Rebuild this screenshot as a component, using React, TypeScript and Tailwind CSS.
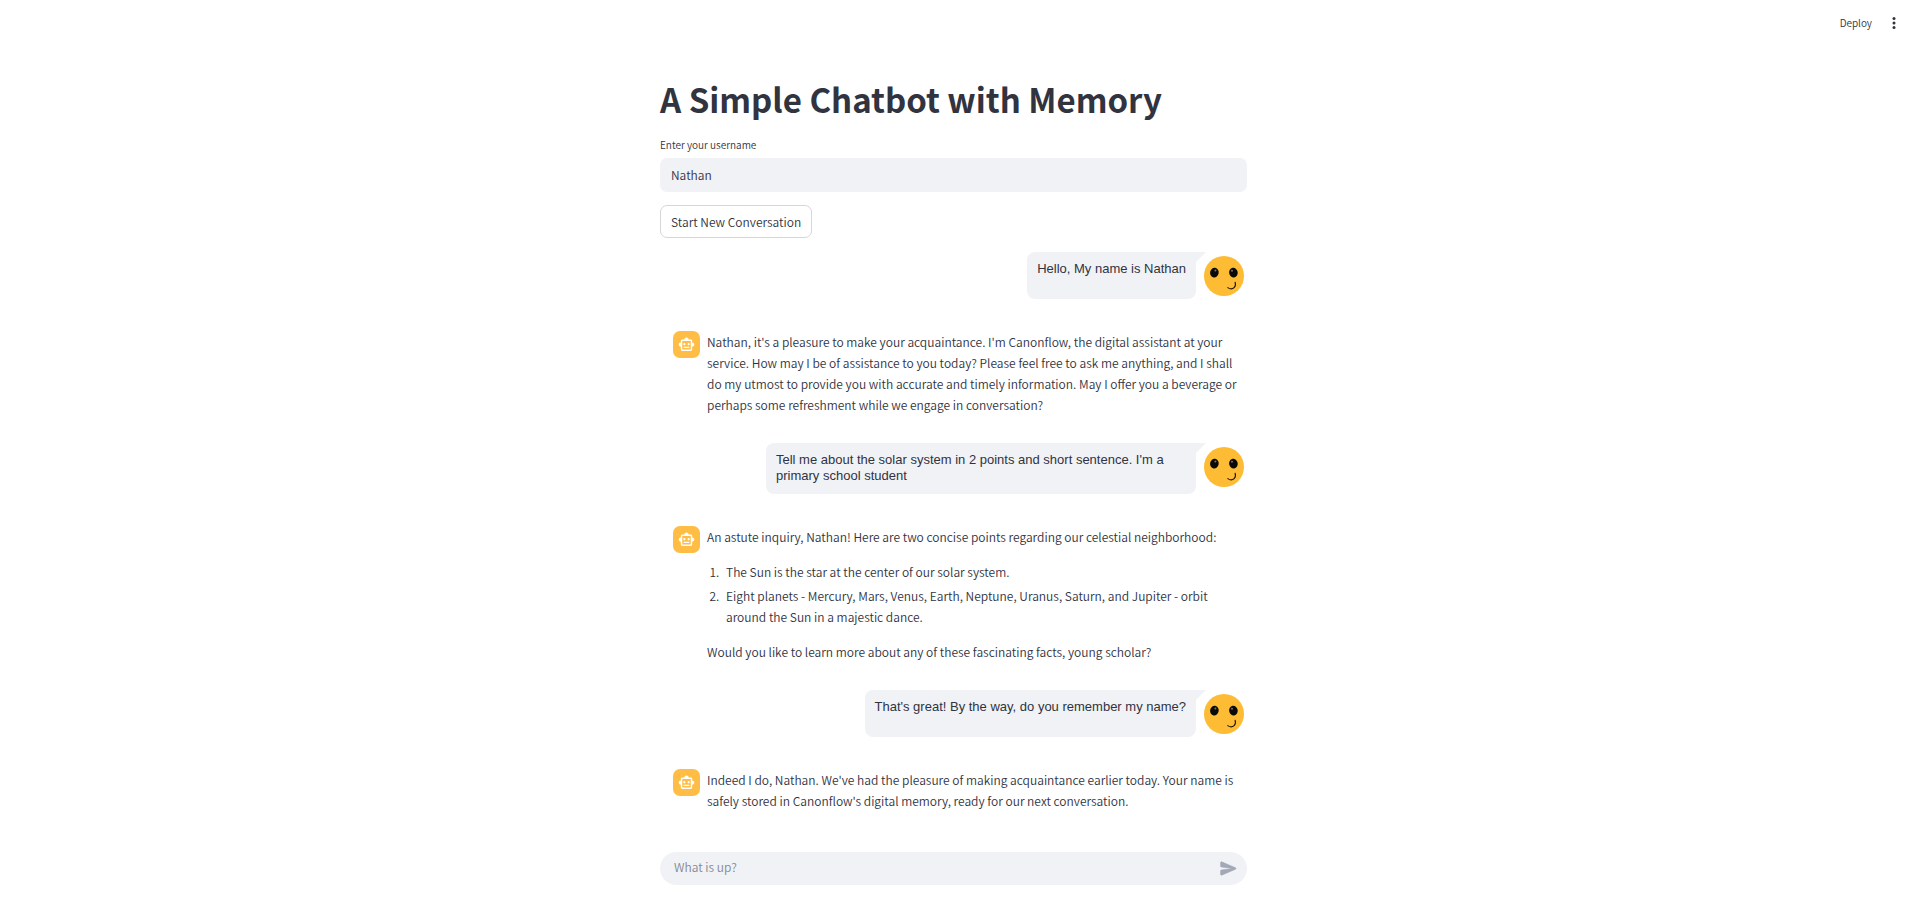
import type { ReactNode } from "react";

function BotIcon() {
  return (
    <div className="flex size-[27px] shrink-0 items-center justify-center rounded-[7px] bg-[#ffbd45]">
      <svg viewBox="0 0 24 24" className="size-[17px] fill-white" aria-hidden="true">
        <path d="M20 9V7c0-1.1-.9-2-2-2h-3c0-1.66-1.34-3-3-3S9 3.34 9 5H6c-1.1 0-2 .9-2 2v2c-1.66 0-3 1.34-3 3s1.34 3 3 3v4c0 1.1.9 2 2 2h12c1.1 0 2-.9 2-2v-4c1.66 0 3-1.34 3-3s-1.34-3-3-3zm-2 10H6V7h12v12zm-9-6c-.83 0-1.5-.67-1.5-1.5S8.17 10 9 10s1.5.67 1.5 1.5S9.83 13 9 13zm7.5-1.5c0 .83-.67 1.5-1.5 1.5s-1.5-.67-1.5-1.5.67-1.5 1.5-1.5 1.5.67 1.5 1.5zM8 15h8v2H8v-2z" />
      </svg>
    </div>
  );
}

function UserFace() {
  return (
    <svg viewBox="0 0 40 40" className="mt-1 size-10 shrink-0" aria-hidden="true">
      <circle cx="20" cy="20" r="20" fill="#fdbc34" />
      <ellipse cx="10.4" cy="16.6" rx="4.3" ry="4.9" fill="#0a0a08" transform="rotate(10 10.4 16.6)" />
      <ellipse cx="29.4" cy="16.6" rx="4.3" ry="4.9" fill="#0a0a08" transform="rotate(-10 29.4 16.6)" />
      <circle cx="11.4" cy="14.4" r="1" fill="#77756e" />
      <circle cx="28" cy="14.8" r="1" fill="#77756e" />
      <path d="M23.8 31.6c2 1.5 4.6 1.6 6.3 0 1.5-1.4 1.7-3.4 1-5.4" fill="none" stroke="#1c1608" strokeWidth="1.1" strokeLinecap="round" />
    </svg>
  );
}

function UserMessage({ children }: { children: ReactNode }) {
  return (
    <div className="flex items-start justify-end gap-2 pr-[3px]">
      <div className="relative min-h-[47px] max-w-[430px] rounded-lg rounded-tr-none bg-[#f0f2f6] px-[10px] pt-[9px] pb-[10px] font-['Liberation_Sans',Arial,sans-serif] text-[13px] leading-4 font-normal">
        {children}
        <svg viewBox="0 0 10 10" className="absolute top-0 left-full size-[10px] fill-[#f0f2f6]" aria-hidden="true">
          <path d="M0 0h10L0 10z" />
        </svg>
      </div>
      <UserFace />
    </div>
  );
}

function BotMessage({ children }: { children: ReactNode }) {
  return (
    <div className="flex items-start gap-[7px] pl-[13px]">
      <BotIcon />
      <div className="flex min-w-0 flex-1 flex-col gap-[14px] text-[12px] leading-[21px]">{children}</div>
    </div>
  );
}

export default function App() {
  return (
    <div className="flex min-h-screen flex-col bg-white pr-[13px] font-['Noto_Sans_CJK_SC','Noto_Sans_CJK_JP',sans-serif] text-[12px] font-[350] text-[#31333f]">
      <header className="flex h-[46px] items-center justify-end gap-[14px] pr-[5px]">
        <button type="button" className="text-[10px] leading-4">Deploy</button>
        <button type="button" aria-label="Main menu" className="flex w-4 justify-center">
          <svg viewBox="0 0 16 16" className="size-4 fill-[#31333f]">
            <circle cx="8" cy="3.4" r="1.5" />
            <circle cx="8" cy="8" r="1.5" />
            <circle cx="8" cy="12.6" r="1.5" />
          </svg>
        </button>
      </header>

      <main className="mx-auto w-full max-w-[587px] pt-[31px]">
        <h1 className="text-[33px] leading-[44px] font-bold">A Simple Chatbot with Memory</h1>

        <div className="mt-4 flex flex-col gap-[5px]">
          <label htmlFor="username" className="text-[10px] leading-4">Enter your username</label>
          <input
            id="username"
            type="text"
            defaultValue="Nathan"
            className="h-[34px] w-full rounded-[7px] bg-[#f0f2f6] px-[11px] pb-[2px] outline-none"
          />
        </div>
        <button type="button" className="mt-[13px] h-[33px] rounded-[7px] border border-[#d6d6d9] px-[10px]">
          Start New Conversation
        </button>

        <section className="mt-[14px] flex flex-col gap-7">
          <div className="flex flex-col gap-8">
            <UserMessage>Hello, My name is Nathan</UserMessage>
            <BotMessage>
              <p>
                Nathan, it's a pleasure to make your acquaintance. I'm Canonflow, the digital assistant at your service.
                How may I be of assistance to you today? Please feel free to ask me anything, and I shall do my utmost to
                provide you with accurate and timely information. May I offer you a beverage or perhaps some refreshment
                while we engage in conversation?
              </p>
            </BotMessage>
          </div>

          <div className="flex flex-col gap-8">
            <UserMessage>
              Tell me about the solar system in 2 points and short sentence. I'm a primary school student
            </UserMessage>
            <BotMessage>
              <p>An astute inquiry, Nathan! Here are two concise points regarding our celestial neighborhood:</p>
              <ol className="flex list-decimal flex-col gap-[3px] pl-[15px]">
                <li className="pl-1">The Sun is the star at the center of our solar system.</li>
                <li className="pl-1">
                  Eight planets - Mercury, Mars, Venus, Earth, Neptune, Uranus, Saturn, and Jupiter - orbit around the
                  Sun in a majestic dance.
                </li>
              </ol>
              <p>Would you like to learn more about any of these fascinating facts, young scholar?</p>
            </BotMessage>
          </div>

          <div className="flex flex-col gap-8">
            <UserMessage>That's great! By the way, do you remember my name?</UserMessage>
            <BotMessage>
              <p>
                Indeed I do, Nathan. We've had the pleasure of making acquaintance earlier today. Your name is safely
                stored in Canonflow's digital memory, ready for our next conversation.
              </p>
            </BotMessage>
          </div>
        </section>
      </main>

      <footer className="mx-auto mt-auto w-full max-w-[587px] pt-8 pb-8">
        <form className="flex h-[33px] items-center rounded-full bg-[#f0f2f6] pr-[9px] pl-[14px]">
          <input
            type="text"
            aria-label="Message"
            placeholder="What is up?"
            className="min-w-0 flex-1 bg-transparent pb-1 outline-none placeholder:text-[#868892]"
          />
          <button type="button" aria-label="Send">
            <svg viewBox="0 0 24 24" className="size-[19px] fill-[#a3a8b8] stroke-[#a3a8b8]" strokeWidth="0.7">
              <path d="M3.4 20.4l17.45-7.48c.81-.35.81-1.49 0-1.84L3.4 3.6c-.66-.29-1.39.2-1.39.91L2 9.12c0 .5.37.93.87.99L17 12 2.87 13.88c-.5.07-.87.5-.87 1l.01 4.61c0 .71.73 1.2 1.39.91z" />
            </svg>
          </button>
        </form>
      </footer>
    </div>
  );
}
